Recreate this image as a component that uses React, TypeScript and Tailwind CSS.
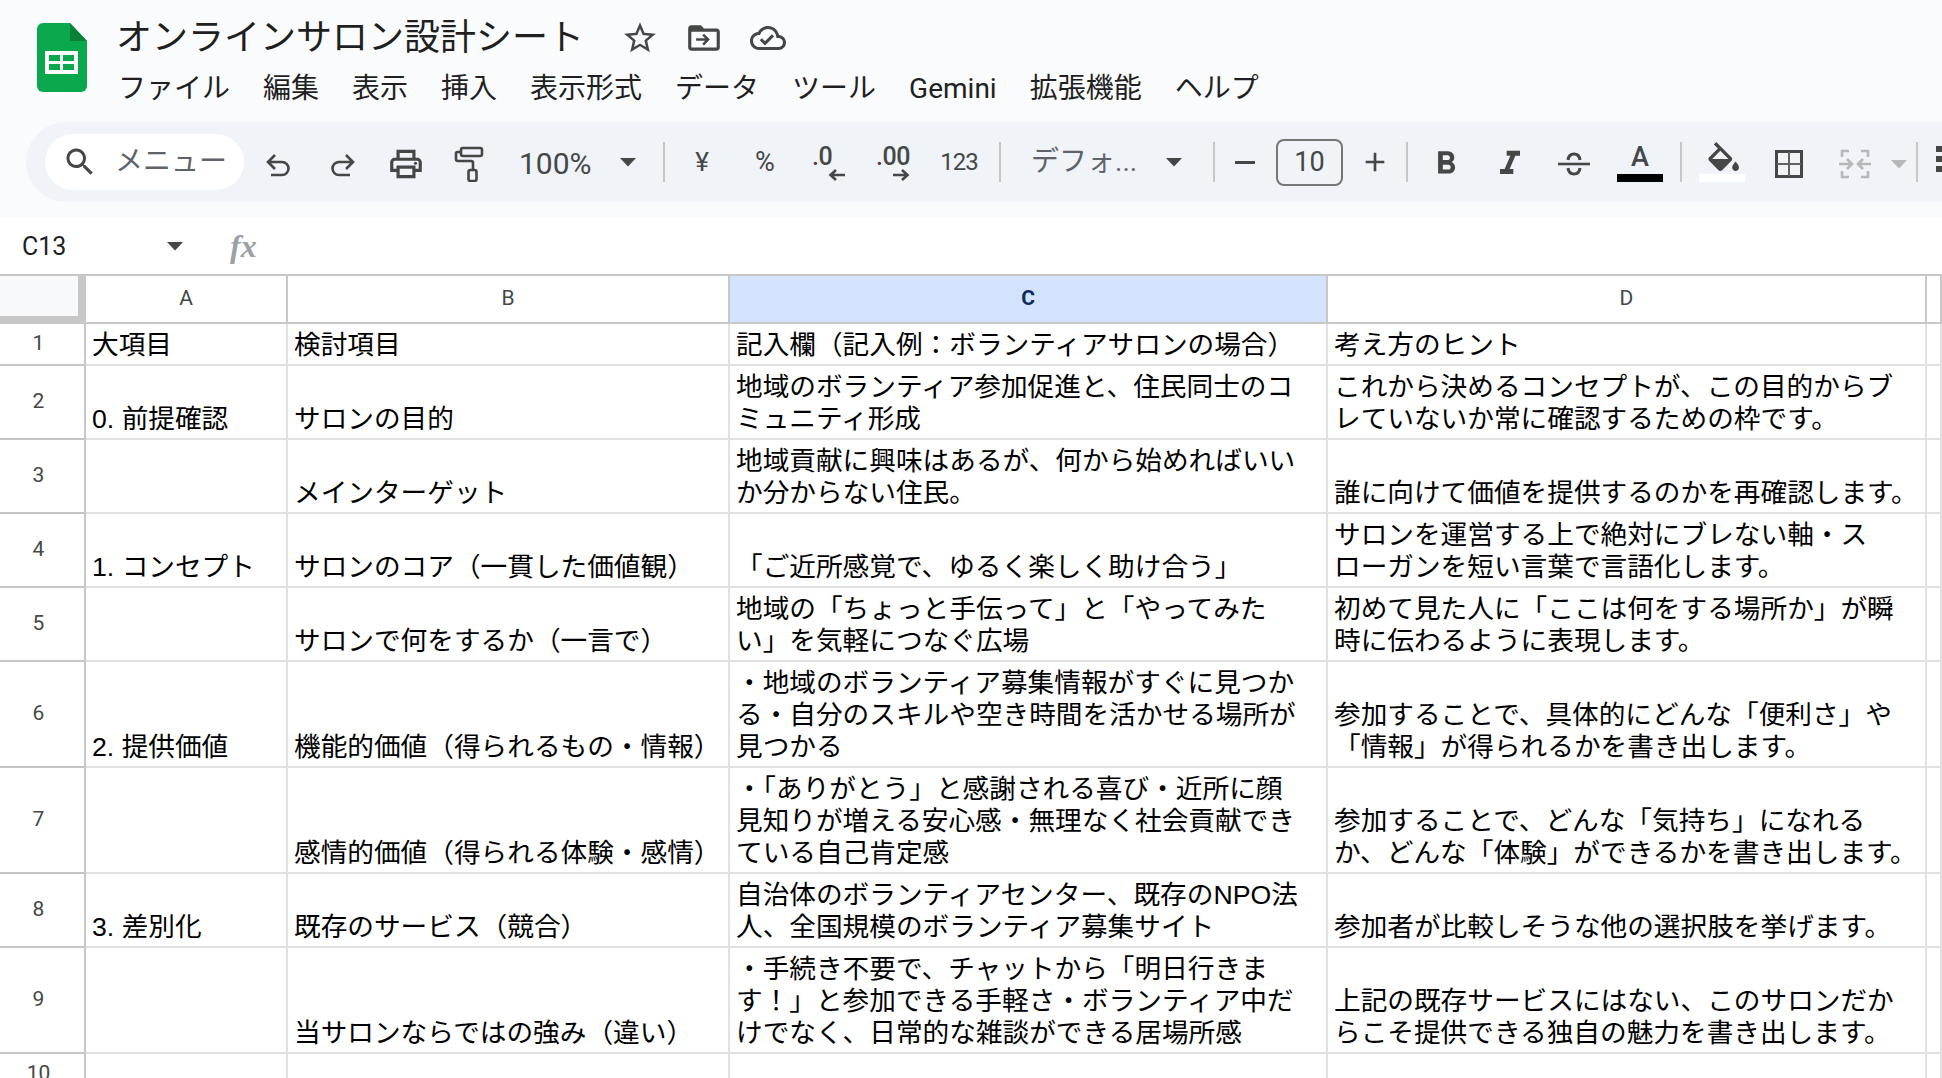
import type { ReactNode } from 'react';

const ICON = '#444746';

function Icon({ d, size = 24, color = ICON, rule }: { d: string; size?: number; color?: string; rule?: 'evenodd' }) {
  return (
    <svg width={size} height={size} viewBox="0 0 24 24" fill={color}>
      <path d={d} fillRule={rule} />
    </svg>
  );
}

function Caret({ color = ICON, className = '' }: { color?: string; className?: string }) {
  return (
    <svg width="18" height="10" viewBox="0 0 18 10" fill={color} className={className}>
      <path d="M1 1h16L9 9.5z" />
    </svg>
  );
}

function Sep() {
  return <div className="mx-[6px] h-[40px] w-[2px] shrink-0 bg-[#c7c7c7]" />;
}

function Btn({ w = 'w-[64px]', children }: { w?: string; children: ReactNode }) {
  return <div className={`flex h-full shrink-0 items-center justify-center ${w}`}>{children}</div>;
}

function SheetsLogo() {
  return (
    <svg width="50" height="69" viewBox="0 0 50 69" className="shrink-0">
      <path d="M6 0h27l17 18v45a6 6 0 0 1-6 6H6a6 6 0 0 1-6-6V6a6 6 0 0 1 6-6z" fill="#0aa84c" />
      <path d="M33 0l17 18H33z" fill="#0a8137" />
      <path
        fillRule="evenodd"
        d="M8 28h33v23H8zM12 32v6h11v-6zM26 32v6h11v-6zM12 41v6h11v-6zM26 41v6h11v-6z"
        fill="#fff"
      />
    </svg>
  );
}

const menus = ['ファイル', '編集', '表示', '挿入', '表示形式', 'データ', 'ツール', 'Gemini', '拡張機能', 'ヘルプ'];

type Row = { a?: string; b: string; c: string[]; d: string[] };

const rows: Row[] = [
  { a: '大項目', b: '検討項目', c: ['記入欄（記入例：ボランティアサロンの場合）'], d: ['考え方のヒント'] },
  {
    a: '0. 前提確認',
    b: 'サロンの目的',
    c: ['地域のボランティア参加促進と、住民同士のコ', 'ミュニティ形成'],
    d: ['これから決めるコンセプトが、この目的からブ', 'レていないか常に確認するための枠です。'],
  },
  {
    b: 'メインターゲット',
    c: ['地域貢献に興味はあるが、何から始めればいい', 'か分からない住民。'],
    d: ['誰に向けて価値を提供するのかを再確認します。'],
  },
  {
    a: '1. コンセプト',
    b: 'サロンのコア（一貫した価値観）',
    c: ['「ご近所感覚で、ゆるく楽しく助け合う」'],
    d: ['サロンを運営する上で絶対にブレない軸・ス', 'ローガンを短い言葉で言語化します。'],
  },
  {
    b: 'サロンで何をするか（一言で）',
    c: ['地域の「ちょっと手伝って」と「やってみた', 'い」を気軽につなぐ広場'],
    d: ['初めて見た人に「ここは何をする場所か」が瞬', '時に伝わるように表現します。'],
  },
  {
    a: '2. 提供価値',
    b: '機能的価値（得られるもの・情報）',
    c: ['・地域のボランティア募集情報がすぐに見つか', 'る・自分のスキルや空き時間を活かせる場所が', '見つかる'],
    d: ['参加することで、具体的にどんな「便利さ」や', '「情報」が得られるかを書き出します。'],
  },
  {
    b: '感情的価値（得られる体験・感情）',
    c: ['・「ありがとう」と感謝される喜び・近所に顔', '見知りが増える安心感・無理なく社会貢献でき', 'ている自己肯定感'],
    d: ['参加することで、どんな「気持ち」になれる', 'か、どんな「体験」ができるかを書き出します。'],
  },
  {
    a: '3. 差別化',
    b: '既存のサービス（競合）',
    c: ['自治体のボランティアセンター、既存のNPO法', '人、全国規模のボランティア募集サイト'],
    d: ['参加者が比較しそうな他の選択肢を挙げます。'],
  },
  {
    b: '当サロンならではの強み（違い）',
    c: ['・手続き不要で、チャットから「明日行きま', 'す！」と参加できる手軽さ・ボランティア中だ', 'けでなく、日常的な雑談ができる居場所感'],
    d: ['上記の既存サービスにはない、このサロンだか', 'らこそ提供できる独自の魅力を書き出します。'],
  },
];

function Cell({ lines }: { lines: string[] }) {
  return (
    <div className="flex flex-col justify-end overflow-hidden whitespace-nowrap border-r-2 border-b-2 border-[#e1e1e1] pb-[3px] pl-[6px] text-[26.67px] leading-[32px] text-black">
      {lines.map((line) => (
        <div key={line}>{line}</div>
      ))}
    </div>
  );
}

function RowHead({ n }: { n: number }) {
  return (
    <div className="flex items-center justify-center overflow-hidden border-r-2 border-b-2 border-[#c7c7c7] bg-white pr-[7px] font-['Roboto'] text-[21px] text-[#444746]">
      {n}
    </div>
  );
}

function ColHead({ label, active }: { label: string; active?: boolean }) {
  return (
    <div
      className={`flex items-center justify-center border-r-2 border-b-2 border-[#c7c7c7] font-['Roboto'] text-[21px] ${
        active ? 'bg-[#d3e3fd] font-bold text-[#0b2d5c]' : 'bg-white text-[#444746]'
      }`}
    >
      {label}
    </div>
  );
}

export default function App() {
  return (
    <div className="flex h-screen w-full flex-col overflow-hidden bg-white font-['Liberation_Sans','Noto_Sans_CJK_JP',sans-serif]">
      <header className="h-[218px] shrink-0 bg-[#f9fbfd] font-['Roboto','Noto_Sans_CJK_JP',sans-serif] text-[#1f1f1f]">
        <div className="flex pt-[23px] pl-[37px]">
          <SheetsLogo />
          <div className="-mt-[3px] ml-[29px]">
            <div className="flex h-[36px] items-center">
              <span className="text-[36px] leading-[36px] whitespace-nowrap text-[#1f1f1f]">オンラインサロン設計シート</span>
              <div className="ml-[37px] flex items-center">
                <Icon size={38} d="M22 9.24l-7.19-.62L12 2 9.19 8.63 2 9.24l5.46 4.73L5.82 21 12 17.27 18.18 21l-1.63-7.03L22 9.24zM12 15.4l-3.76 2.27 1-4.28-3.32-2.88 4.38-.38L12 6.1l1.71 4.04 4.38.38-3.32 2.88 1 4.28L12 15.4z" />
                <div className="ml-[26px]">
                  <Icon
                    size={38}
                    rule="evenodd"
                    d="M20 6h-8l-2-2H4c-1.1 0-2 .9-2 2v12c0 1.1.9 2 2 2h16c1.1 0 2-.9 2-2V8c0-1.1-.9-2-2-2zM4 8h16v10H4zM12 9.3l-1.1 1.1 1.8 1.8H7v1.6h5.7l-1.8 1.8 1.1 1.1 3.7-3.7z"
                  />
                </div>
                <div className="ml-[27px]">
                  <Icon
                    size={36}
                    d="M19.35 10.04C18.67 6.59 15.64 4 12 4 9.11 4 6.6 5.64 5.35 8.04 2.34 8.36 0 10.91 0 14c0 3.31 2.69 6 6 6h13c2.76 0 5-2.24 5-5 0-2.64-2.05-4.78-4.65-4.96zM19 18H6c-2.21 0-4-1.79-4-4 0-2.05 1.53-3.76 3.56-3.97l1.07-.11.5-.95C8.08 7.14 9.94 6 12 6c2.62 0 4.88 1.86 5.39 4.43l.3 1.5 1.53.11c1.56.1 2.78 1.41 2.78 2.96 0 1.65-1.35 3-3 3zm-9-3.82l-2.09-2.09L6.5 13.5 10 17l6.01-6.01-1.41-1.41z"
                  />
                </div>
              </div>
            </div>
            <div className="mt-[15px] flex gap-[33px] pl-[2px] text-[28px] leading-[36px] whitespace-nowrap">
              {menus.map((m) => (
                <span key={m}>{m}</span>
              ))}
            </div>
          </div>
        </div>

        <div className="mt-[15px] ml-[26px] flex h-[80px] items-center rounded-l-[40px] bg-[#f0f3f8] pl-[19px] text-[#444746]">
          <div className="flex h-[56px] w-[199px] shrink-0 items-center rounded-full bg-white pl-[17px]">
            <Icon size={36} d="M15.5 14h-.79l-.28-.27C15.41 12.59 16 11.11 16 9.5 16 5.91 13.09 3 9.5 3S3 5.91 3 9.5 5.91 16 9.5 16c1.61 0 3.09-.59 4.23-1.57l.27.28v.79l5 4.99L20.49 19l-4.99-5zm-6 0C7.01 14 5 11.99 5 9.5S7.01 5 9.5 5 14 7.01 14 9.5 11.99 14 9.5 14z" />
            <span className="ml-[17px] text-[28px] leading-none whitespace-nowrap text-[#5f6368]">メニュー</span>
          </div>
          <div className="h-full w-[1px] shrink-0" />
          <Btn>
            <svg width="26" height="24" viewBox="0 0 26 24" fill="none" stroke={ICON} strokeWidth="2.6" className="mt-[6px] ml-[3px]">
              <path d="M9 2L2 9l7 7M3 9h13a6.500 6.500 0 0 1 0 13H5" />
            </svg>
          </Btn>
          <Btn>
            <svg width="26" height="24" viewBox="0 0 26 24" fill="none" stroke={ICON} strokeWidth="2.6" className="mt-[6px] ml-[1px]">
              <path d="M17 2l7 7-7 7M23 9H10a6.500 6.500 0 0 0 0 13h11" />
            </svg>
          </Btn>
          <Btn>
            <svg width="38" height="38" viewBox="0 0 24 24" fill={ICON} className="mt-[4px] ml-[1px]">
              <path d="M19 8h-1V3H6v5H5c-1.660 0-3 1.340-3 3v6h4v4h12v-4h4v-6c0-1.660-1.340-3-3-3zM8 5h8v3H8V5zm8 12v2H8v-4h8v2zm2-2v-2H6v2H4v-4c0-.55.45-1 1-1h14c.55 0 1 .45 1 1v4h-2z" />
              <circle cx="18" cy="11.5" r="1" />
            </svg>
          </Btn>
          <Btn>
            <svg width="30" height="36" viewBox="0 0 30 36" fill="none" stroke={ICON} strokeWidth="2.6" className="mt-[3px]">
              <rect x="7" y="2" width="21" height="8" rx="2" />
              <path d="M7 6H3.500A1.500 1.500 0 0 0 2 7.500V13a2 2 0 0 0 2 2h13a2 2 0 0 1 2 2v7" />
              <rect x="14.500" y="24" width="8" height="11" rx="2" />
            </svg>
          </Btn>
          <div className="flex h-full w-[156px] shrink-0 items-center pl-[18px]">
            <span className="mt-[3px] text-[30px] leading-none">100%</span>
            <Caret className="ml-[27px]" />
          </div>
          <Sep />
          <Btn w="w-[62px]">
            <span className="text-[26px]">¥</span>
          </Btn>
          <Btn>
            <span className="text-[27px]">%</span>
          </Btn>
          <Btn>
            <div className="relative h-[44px] w-[34px] font-medium">
              <span className="text-[25px] leading-[34px] tracking-[-0.5px]">.0</span>
              <svg width="18" height="14" viewBox="0 0 18 14" fill="none" stroke={ICON} strokeWidth="2.6" className="absolute right-0 bottom-[2px]">
                <path d="M8 2L2.500 7 8 12M3 7h14" />
              </svg>
            </div>
          </Btn>
          <Btn>
            <div className="relative h-[44px] w-[34px] font-medium">
              <span className="text-[25px] leading-[34px] tracking-[-0.5px] whitespace-nowrap">.00</span>
              <svg width="18" height="14" viewBox="0 0 18 14" fill="none" stroke={ICON} strokeWidth="2.6" className="absolute right-0 bottom-[2px]">
                <path d="M10 2l5.500 5L10 12M1 7h14" />
              </svg>
            </div>
          </Btn>
          <Btn w="w-[68px]">
            <span className="text-[24px] tracking-[-1px]">123</span>
          </Btn>
          <Sep />
          <div className="flex h-full w-[200px] shrink-0 items-center pl-[24px]">
            <span className="text-[28px] leading-none whitespace-nowrap text-[#5f6368]">デフォ...</span>
            <Caret className="ml-[28px]" />
          </div>
          <Sep />
          <Btn w="w-[48px]">
            <div className="h-[3px] w-[20px] bg-[#444746]" />
          </Btn>
          <div className="mx-[7px] flex h-[47px] w-[67px] shrink-0 items-center justify-center rounded-[8px] border-2 border-[#747775] text-[27px]">
            10
          </div>
          <Btn w="w-[50px]">
            <Icon size={32} d="M19 13h-6v6h-2v-6H5v-2h6V5h2v6h6v2z" />
          </Btn>
          <Sep />
          <Btn>
            <div className="mt-[4px]">
              <Icon size={38} d="M15.6 10.79c.97-.67 1.65-1.77 1.65-2.79 0-2.26-1.75-4-4-4H7v14h7.04c2.09 0 3.71-1.7 3.71-3.79 0-1.52-.86-2.82-2.15-3.42zM10 6.5h3c.83 0 1.5.67 1.5 1.5s-.67 1.5-1.5 1.5h-3v-3zm3.500 9H10v-3h3.500c.83 0 1.500.67 1.500 1.500s-.67 1.500-1.500 1.500z" />
            </div>
          </Btn>
          <Btn>
            <div className="mt-[4px]">
              <Icon size={40} d="M10 4v3h2.210l-3.420 8H6v3h8v-3h-2.210l3.420-8H18V4z" />
            </div>
          </Btn>
          <Btn>
            <svg width="34" height="26" viewBox="0 0 34 26" fill="none" stroke={ICON} className="mt-[4px]">
              <path d="M1 13h32" strokeWidth="2.6" />
              <path d="M11 9c.5-4 3-6 6-6s5.500 2 6 6M11 17c.5 4 3 6 6 6s5.500-2 6-6" strokeWidth="3" />
            </svg>
          </Btn>
          <div className="relative flex h-full w-[68px] shrink-0 items-center justify-center">
            <div className="flex h-[40px] w-[46px] flex-col items-center">
              <span className="text-[27px] leading-[30px] font-medium">A</span>
              <div className="mt-auto h-[8px] w-full bg-black" />
            </div>
          </div>
          <Sep />
          <div className="flex h-full w-[68px] shrink-0 flex-col items-center justify-center">
            <div className="flex h-[40px] w-[46px] flex-col items-center">
              <div className="h-[30px]">
                <svg width="38" height="34" viewBox="0 0 22 20" fill={ICON}>
                  <path d="M16.560 8.940L7.620 0 6.210 1.410l2.380 2.380-5.150 5.150c-.59.59-.59 1.540 0 2.120l5.500 5.500c.29.29.68.44 1.060.44s.77-.15 1.060-.44l5.500-5.500c.59-.58.59-1.530 0-2.120zM5.210 10L10 5.210 14.790 10H5.210zM19 11.500s-2 2.170-2 3.500c0 1.100.9 2 2 2s2-.9 2-2c0-1.330-2-3.500-2-3.500z" />
                </svg>
              </div>
              <div className="mt-auto h-[8px] w-full bg-white" />
            </div>
          </div>
          <Btn w="w-[66px]">
            <svg width="28" height="28" viewBox="0 0 28 28" fill="none" stroke={ICON} className="mt-[4px]">
              <path d="M1.500 1.500h25v25h-25z" strokeWidth="3" />
              <path d="M14 2v24M2 14h24" strokeWidth="2" stroke="#5f6368" />
            </svg>
          </Btn>
          <Btn w="w-[66px]">
            <svg width="32" height="30" viewBox="0 0 32 30" fill="none" stroke="#b4b8ba" strokeWidth="2.600" className="mt-[4px]">
              <path d="M10 2H3v6M22 2h7v6M10 28H3v-6M22 28h7v-6" />
              <path d="M0 15h13M8 10l5 5-5 5M32 15H19M24 10l-5 5 5 5" />
            </svg>
          </Btn>
          <Btn w="w-[22px]">
            <Caret color="#b4b8ba" className="mt-[4px]" />
          </Btn>
          <Sep />
          <svg width="6" height="36" viewBox="0 0 6 36" fill={ICON} className="ml-[12px] shrink-0">
            <path d="M0 2h6v6H0zM0 12h6v6H0zM0 22h6v6H0z" />
          </svg>
        </div>
      </header>

      <div className="flex h-[56px] shrink-0 items-center font-['Roboto'] text-[#1f1f1f]">
        <span className="ml-[22px] w-[144px] text-[25px] leading-none">C13</span>
        <Caret />
        <span className="ml-[46px] font-['Liberation_Serif'] text-[32px] leading-none font-bold text-[#9aa0a6] italic">fx</span>
      </div>

      <div className="grid flex-1 grid-cols-[86px_202px_442px_598px_599px_15px] grid-rows-[48px_42px_74px_74px_74px_74px_106px_106px_74px_106px_42px] overflow-hidden border-t-2 border-[#c7c7c7]">
        <div className="border-r-[8px] border-b-[8px] border-[#c7c7c7] bg-[#f8f9fa]" />
        <ColHead label="A" />
        <ColHead label="B" />
        <ColHead label="C" active />
        <ColHead label="D" />
        <ColHead label="" />
        {rows.map((r, i) => (
          <div key={r.b} className="contents">
            <RowHead n={i + 1} />
            <Cell lines={r.a ? [r.a] : []} />
            <Cell lines={[r.b]} />
            <Cell lines={r.c} />
            <Cell lines={r.d} />
            <Cell lines={[]} />
          </div>
        ))}
        <RowHead n={10} />
        <Cell lines={[]} />
        <Cell lines={[]} />
        <Cell lines={[]} />
        <Cell lines={[]} />
        <Cell lines={[]} />
      </div>
    </div>
  );
}
